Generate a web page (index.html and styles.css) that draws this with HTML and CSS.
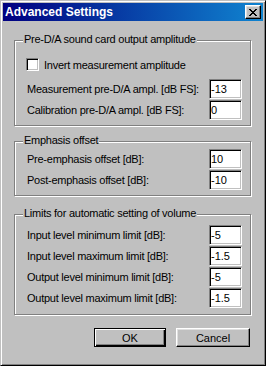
FILE: index.html
```html
<!DOCTYPE html>
<html lang="en">
<head>
    <meta charset="UTF-8">
    <title>Advanced Settings</title>
    <link rel="stylesheet" href="styles.css">
</head>
<body>
    <div class="window">
        <div class="caption">
            <span class="caption-text">Advanced Settings</span>
            <button class="close-btn" type="button">
                <svg width="8" height="7" viewBox="0 0 8 7"><path fill="#000" d="M0 0h2v1H0zM6 0h2v1H6zM1 1h2v1H1zM5 1h2v1H5zM2 2h4v1H2zM3 3h2v1H3zM2 4h4v1H2zM1 5h2v1H1zM5 5h2v1H5zM0 6h2v1H0zM6 6h2v1H6z"/></svg>
            </button>
        </div>

        <div class="dialog">
            <div class="group group-amp">
                <div class="group-title">Pre-D/A sound card output amplitude</div>
                <label class="check-row">
                    <span class="checkbox"></span>
                    <span class="label">Invert measurement amplitude</span>
                </label>
                <div class="rows">
                    <div class="row">
                        <span class="label">Measurement pre-D/A ampl. [dB FS]:</span>
                        <input class="edit" type="text" value="-13">
                    </div>
                    <div class="row">
                        <span class="label">Calibration pre-D/A ampl. [dB FS]:</span>
                        <input class="edit" type="text" value="0">
                    </div>
                </div>
            </div>

            <div class="group group-emph">
                <div class="group-title">Emphasis offset</div>
                <div class="rows">
                    <div class="row">
                        <span class="label">Pre-emphasis offset [dB]:</span>
                        <input class="edit" type="text" value="10">
                    </div>
                    <div class="row">
                        <span class="label">Post-emphasis offset [dB]:</span>
                        <input class="edit" type="text" value="-10">
                    </div>
                </div>
            </div>

            <div class="group group-limits">
                <div class="group-title">Limits for automatic setting of volume</div>
                <div class="rows">
                    <div class="row">
                        <span class="label">Input level minimum limit [dB]:</span>
                        <input class="edit" type="text" value="-5">
                    </div>
                    <div class="row">
                        <span class="label">Input level maximum limit [dB]:</span>
                        <input class="edit" type="text" value="-1.5">
                    </div>
                    <div class="row">
                        <span class="label">Output level minimum limit [dB]:</span>
                        <input class="edit" type="text" value="-5">
                    </div>
                    <div class="row">
                        <span class="label">Output level maximum limit [dB]:</span>
                        <input class="edit" type="text" value="-1.5">
                    </div>
                </div>
            </div>

            <div class="buttons">
                <button class="btn btn-default" type="button">OK</button>
                <button class="btn" type="button">Cancel</button>
            </div>
        </div>
    </div>
</body>
</html>
```

FILE: styles.css
```css
:root {
    --face: #c0c0c0;
    --shadow: #808080;
    --dark: #000000;
    --light: #dfdfdf;
    --white: #ffffff;
}

body {
    margin: 0;
    font-family: "Liberation Sans", Arial, sans-serif;
    font-size: 11px;
    color: #000;
    background: var(--face);
}

.window {
    width: 266px;
    height: 366px;
    box-sizing: border-box;
    background: var(--face);
    border: 1px solid;
    border-color: var(--face) var(--dark) var(--dark) var(--face);
    box-shadow: inset 1px 1px var(--white), inset -1px -1px var(--shadow);
    padding: 2px;
}

.caption {
    height: 18px;
    display: flex;
    align-items: center;
    justify-content: space-between;
    background: linear-gradient(to right, #000080, #1084d0);
    padding: 0 2px;
}

.caption-text {
    color: var(--white);
    font-weight: 700;
    font-size: 12px;
}

.close-btn {
    width: 16px;
    height: 14px;
    box-sizing: border-box;
    padding: 0;
    margin: 0;
    display: flex;
    align-items: center;
    justify-content: center;
    background: var(--face);
    border: 1px solid;
    border-color: var(--white) var(--dark) var(--dark) var(--white);
    box-shadow: inset -1px -1px var(--shadow), inset 1px 1px var(--light);
}

.close-btn svg {
    display: block;
    margin: 1px 0 0 0;
}

.dialog {
    padding: 19px 12px 0 11px;
}

/* etched group box */
.group {
    border: 1px solid var(--shadow);
    box-shadow: inset 1px 1px var(--white), 1px 1px var(--white);
    padding: 0 8px 5px 12px;
}

.group-emph {
    margin-top: 15px;
}

.group-limits {
    margin-top: 18px;
    padding-bottom: 6px;
}

.group-title {
    width: max-content;
    height: 13px;
    line-height: 13px;
    margin: -8px 0 0 -4px;
    padding: 0 1px;
    background: var(--face);
    letter-spacing: -0.25px;
}

.label {
    letter-spacing: -0.25px;
    white-space: nowrap;
}

.check-row {
    display: flex;
    align-items: center;
    gap: 5px;
    height: 13px;
    margin: 12px 0 0 -1px;
}

.checkbox {
    width: 13px;
    height: 13px;
    box-sizing: border-box;
    background: var(--white);
    border: 1px solid;
    border-color: var(--shadow) var(--white) var(--white) var(--shadow);
    box-shadow: inset 1px 1px var(--dark), inset -1px -1px var(--face);
}

.rows {
    display: flex;
    flex-direction: column;
    gap: 1px;
}

.group-amp .rows {
    margin-top: 8px;
}

.group-emph .rows {
    margin-top: 2px;
}

.group-limits .rows {
    margin-top: 5px;
}

.row {
    display: flex;
    align-items: center;
    justify-content: space-between;
    height: 20px;
}

.edit {
    width: 33px;
    height: 20px;
    box-sizing: border-box;
    margin: 0;
    padding: 0 0 0 1px;
    font-family: inherit;
    font-size: 11px;
    color: #000;
    background: var(--white);
    border: 1px solid;
    border-color: var(--shadow) var(--white) var(--white) var(--shadow);
    box-shadow: inset 1px 1px var(--dark), inset -1px -1px var(--face);
    outline: none;
}

.buttons {
    display: flex;
    justify-content: flex-end;
    gap: 10px;
    margin-top: 13px;
    margin-right: 1px;
}

.btn {
    width: 74px;
    height: 19px;
    box-sizing: border-box;
    margin: 0;
    padding: 0;
    font-family: inherit;
    font-size: 11px;
    color: #000;
    background: var(--face);
    border: 1px solid;
    border-color: var(--white) var(--dark) var(--dark) var(--white);
    box-shadow: inset -1px -1px var(--shadow), inset 1px 1px var(--light);
}

.btn-default {
    width: 72px;
    border-color: var(--dark);
    box-shadow: inset 1px 1px var(--white), inset -1px -1px var(--dark), inset -2px -2px var(--shadow);
}
```
